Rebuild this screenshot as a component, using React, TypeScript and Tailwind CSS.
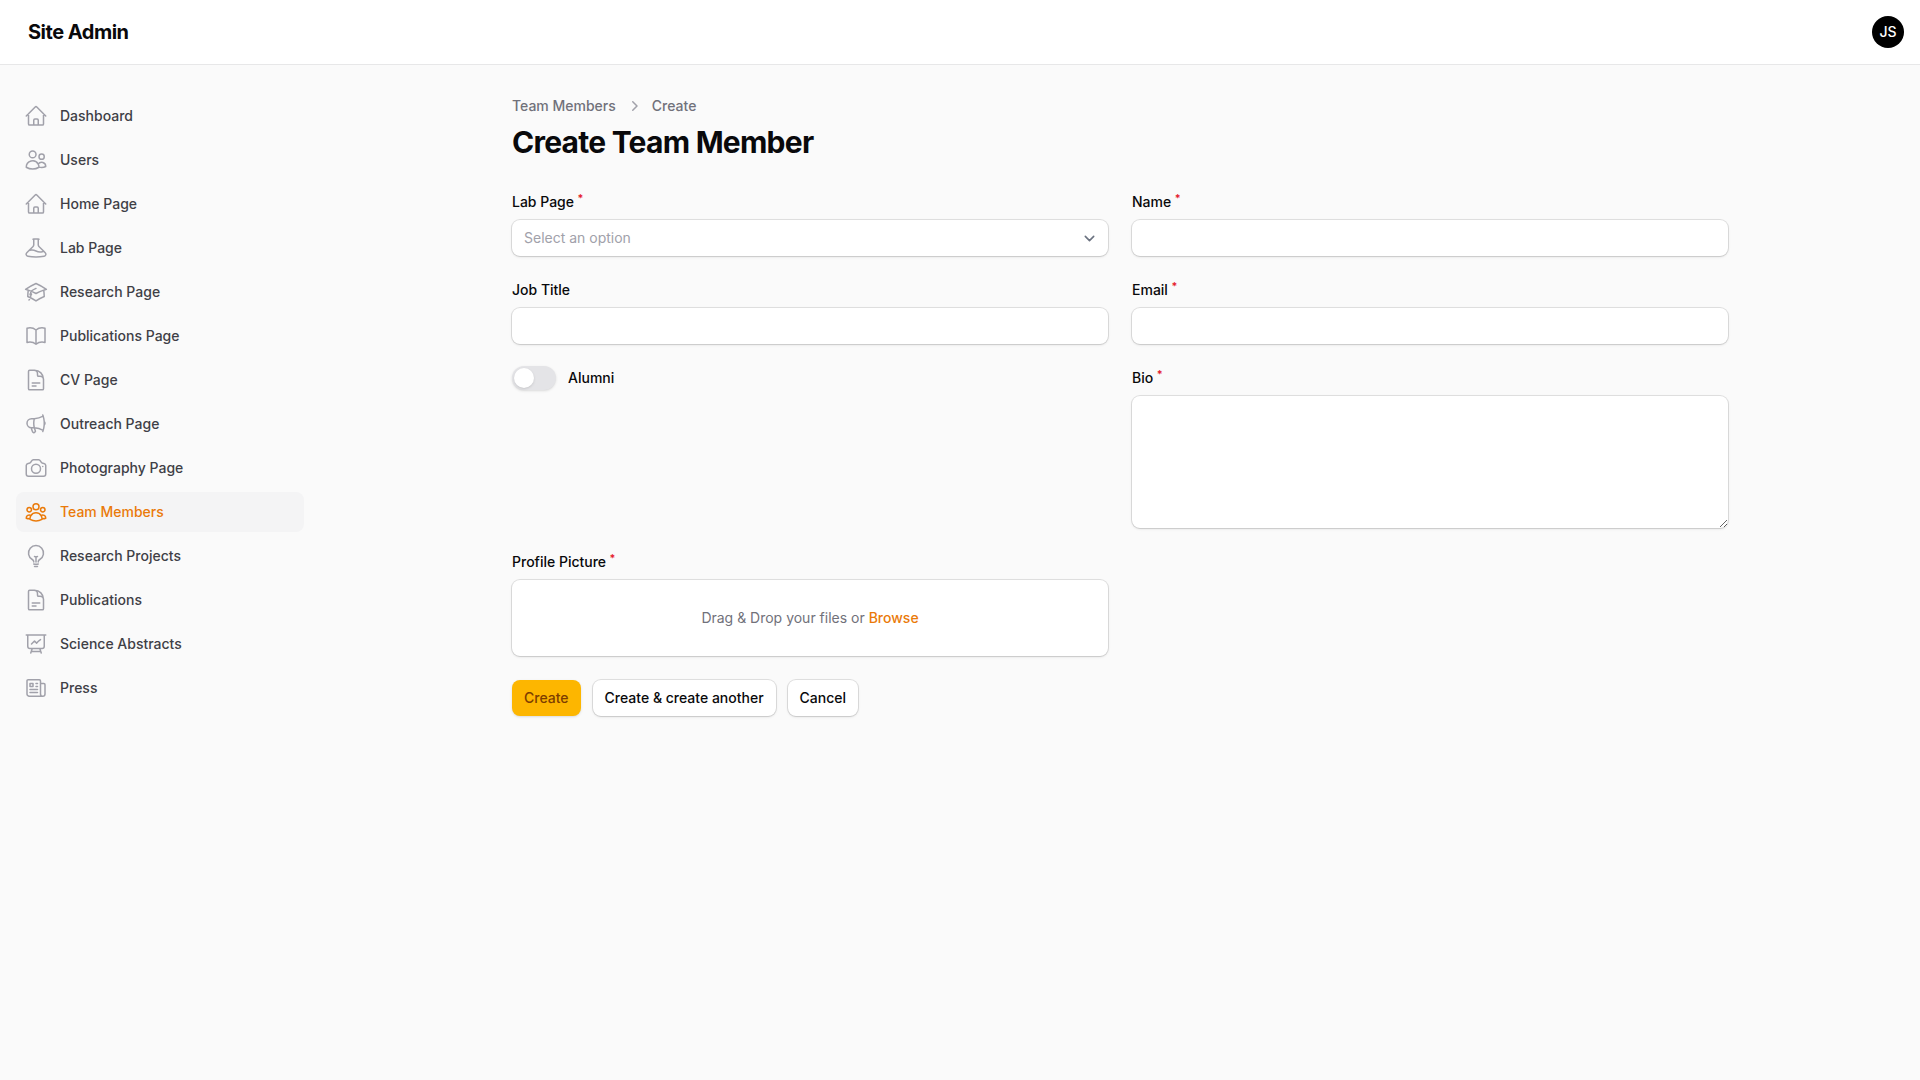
import React from "react";
import {
  HiOutlineHome,
  HiOutlineUsers,
  HiOutlineBeaker,
  HiOutlineAcademicCap,
  HiOutlineBookOpen,
  HiOutlineDocumentText,
  HiOutlineMegaphone,
  HiOutlineCamera,
  HiOutlineUserGroup,
  HiOutlineLightBulb,
  HiOutlinePresentationChartLine,
  HiOutlineNewspaper,
  HiMiniChevronRight,
} from "react-icons/hi2";

const items = [
  { label: "Dashboard", Icon: HiOutlineHome },
  { label: "Users", Icon: HiOutlineUsers },
  { label: "Home Page", Icon: HiOutlineHome },
  { label: "Lab Page", Icon: HiOutlineBeaker },
  { label: "Research Page", Icon: HiOutlineAcademicCap },
  { label: "Publications Page", Icon: HiOutlineBookOpen },
  { label: "CV Page", Icon: HiOutlineDocumentText },
  { label: "Outreach Page", Icon: HiOutlineMegaphone },
  { label: "Photography Page", Icon: HiOutlineCamera },
  { label: "Team Members", Icon: HiOutlineUserGroup, active: true },
  { label: "Research Projects", Icon: HiOutlineLightBulb },
  { label: "Publications", Icon: HiOutlineDocumentText },
  { label: "Science Abstracts", Icon: HiOutlinePresentationChartLine },
  { label: "Press", Icon: HiOutlineNewspaper },
];

function Label({ text, required }: { text: string; required?: boolean }) {
  return (
    <label className="block text-sm leading-5 font-medium text-[#09090b]">
      {text}
      {required && <sup className="ml-[3.5px] font-bold text-[#e5202e]">*</sup>}
    </label>
  );
}

const fieldBox = "block w-full rounded-lg bg-white ring-1 ring-[#09090b]/10 shadow-sm";

function TextField({ label, required }: { label: string; required?: boolean }) {
  return (
    <div className="flex flex-col gap-2">
      <Label text={label} required={required} />
      <input type="text" className={`${fieldBox} h-9 px-3 text-sm outline-none`} />
    </div>
  );
}

export default function App() {
  return (
    <div className="min-h-screen bg-[#fafafa] font-['Inter',sans-serif] text-[#09090b]">
      <header className="flex h-[65px] items-center justify-between border-b border-[#e7e7e8] bg-white pr-4 pl-7">
        <div className="text-xl leading-5 font-bold tracking-tight">Site Admin</div>
        <div className="flex size-8 items-center justify-center rounded-full bg-black text-sm font-medium text-white">
          JS
        </div>
      </header>
      <div className="flex">
        <aside className="w-80 shrink-0 px-4 pt-[31px]">
          <nav className="flex flex-col gap-1">
            {items.map(({ label, Icon, active }) => (
              <div
                key={label}
                className={`flex h-10 items-center gap-3 rounded-lg px-2 text-sm font-medium ${
                  active ? "bg-[#f4f4f5] text-[#ea7a0a]" : "text-[#3f3f46]"
                }`}
              >
                <Icon className={`size-6 ${active ? "text-[#ea7a0a]" : "text-[#a1a1aa]"}`} />
                <span>{label}</span>
              </div>
            ))}
          </nav>
        </aside>
        <main className="min-w-0 flex-1">
          <div className="mx-auto max-w-7xl px-8 pt-[31px] pb-8">
            <nav className="flex h-5 items-center gap-2 text-sm font-medium text-[#71717a]">
              <span>Team Members</span>
              <HiMiniChevronRight className="size-5 text-[#a1a1aa]" />
              <span>Create</span>
            </nav>
            <h1 className="mt-2 text-3xl leading-9 font-bold tracking-tight text-[#09090b]">
              Create Team Member
            </h1>
            <form className="mt-8 flex flex-col gap-6">
              <div className="grid grid-cols-2 items-start gap-6">
                <div className="flex flex-col gap-2">
                  <Label text="Lab Page" required />
                  <div className="relative">
                    <select
                      defaultValue=""
                      className={`${fieldBox} h-9 appearance-none px-3 text-sm text-[#a1a1aa] outline-none`}
                    >
                      <option value="">Select an option</option>
                    </select>
                    <svg
                      viewBox="0 0 20 20"
                      fill="none"
                      className="pointer-events-none absolute top-2 right-2 size-[21px] text-[#6b7280]"
                    >
                      <path d="M6 8l4 4 4-4" stroke="currentColor" strokeWidth="1.5" strokeLinecap="round" strokeLinejoin="round" />
                    </svg>
                  </div>
                </div>
                <TextField label="Name" required />
                <TextField label="Job Title" />
                <TextField label="Email" required />
                <div className="flex h-5 items-center gap-3">
                  <div className="flex h-6 w-11 items-center rounded-full bg-[#e4e4e7] p-0.5 shadow-sm">
                    <div className="size-5 rounded-full bg-white shadow" />
                  </div>
                  <span className="text-sm font-medium text-[#09090b]">Alumni</span>
                </div>
                <div className="flex flex-col gap-2">
                  <Label text="Bio" required />
                  <textarea className={`${fieldBox} h-[132px] resize-y px-3 py-1.5 text-sm outline-none`} />
                </div>
                <div className="flex flex-col gap-2">
                  <Label text="Profile Picture" required />
                  <div className={`${fieldBox} flex h-[76px] items-center justify-center text-sm text-[#71717a]`}>
                    <span>
                      Drag &amp; Drop your files or <span className="font-medium text-[#ea7a0a]">Browse</span>
                    </span>
                  </div>
                </div>
              </div>
              <div className="flex gap-3">
                <button type="button" className="h-9 rounded-lg bg-[#fdb600] px-3 text-sm font-medium text-[#7c3d00] shadow-sm">
                  Create
                </button>
                <button type="button" className="h-9 rounded-lg bg-white px-3 text-sm font-medium text-[#09090b] shadow-sm ring-1 ring-[#09090b]/10">
                  Create &amp; create another
                </button>
                <button type="button" className="h-9 rounded-lg bg-white px-3 text-sm font-medium text-[#09090b] shadow-sm ring-1 ring-[#09090b]/10">
                  Cancel
                </button>
              </div>
            </form>
          </div>
        </main>
      </div>
    </div>
  );
}
